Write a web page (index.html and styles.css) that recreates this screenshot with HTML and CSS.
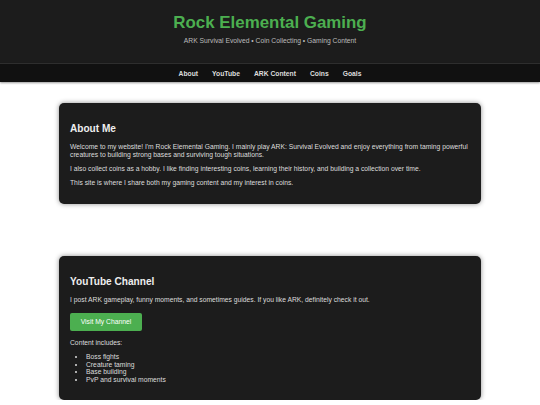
FILE: index.html
```html
<!DOCTYPE html>
<html>
<head>
<meta charset="utf-8">
<link rel="stylesheet" href="styles.css">
</head>
<body>
<header class="site-header">
  <h1 class="site-title">Rock Elemental Gaming</h1>
  <p class="site-tagline">ARK Survival Evolved • Coin Collecting • Gaming Content</p>
</header>
<nav class="site-nav">
  <a href="#about">About</a>
  <a href="#youtube">YouTube</a>
  <a href="#ark">ARK Content</a>
  <a href="#coins">Coins</a>
  <a href="#goals">Goals</a>
</nav>
<main class="content">
  <section class="card" id="about">
    <h2>About Me</h2>
    <p>Welcome to my website! I'm Rock Elemental Gaming. I mainly play ARK: Survival Evolved and enjoy everything from taming powerful creatures to building strong bases and surviving tough situations.</p>
    <p>I also collect coins as a hobby. I like finding interesting coins, learning their history, and building a collection over time.</p>
    <p>This site is where I share both my gaming content and my interest in coins.</p>
  </section>
  <section class="card" id="youtube">
    <h2>YouTube Channel</h2>
    <p>I post ARK gameplay, funny moments, and sometimes guides. If you like ARK, definitely check it out.</p>
    <a class="btn" href="#">Visit My Channel</a>
    <p>Content includes:</p>
    <ul>
      <li>Boss fights</li>
      <li>Creature taming</li>
      <li>Base building</li>
      <li>PvP and survival moments</li>
    </ul>
  </section>
</main>
</body>
</html>
```
FILE: styles.css
```css
html, body {
  margin: 0;
  padding: 0;
}
body {
  font-family: "Liberation Sans", Arial, sans-serif;
  font-size: 6.75px;
  background: #ffffff;
  color: #dddddd;
}
.site-header {
  background: #1c1c1c;
  text-align: center;
  height: 63px;
  padding-top: 13px;
  box-sizing: border-box;
}
.site-title {
  margin: 0;
  font-size: 16.9px;
  line-height: 19px;
  color: #4caf50;
  font-weight: bold;
}
.site-tagline {
  margin: 5px 0 0;
  font-size: 6.75px;
  color: #bbbbbb;
}
.site-nav {
  background: #111111;
  border-top: 1px solid #2e2e2e;
  height: 18px;
  display: flex;
  justify-content: center;
  align-items: center;
  gap: 14px;
  box-shadow: 0 1px 2px rgba(0,0,0,0.4);
}
.site-nav a {
  color: #dddddd;
  font-weight: bold;
  text-decoration: none;
  font-size: 6.75px;
}
.content {
  width: 422px;
  margin: 0 auto;
  padding-top: 21px;
  display: flex;
  flex-direction: column;
  gap: 52px;
}
.card {
  background: #1c1c1c;
  border-radius: 5px;
  padding: 1px 11px 10px;
  box-shadow: 0 0 5px rgba(0,0,0,0.45);
}
.card h2 {
  font-size: 10.1px;
  color: #eeeeee;
  margin: 19px 0 9px;
}
.card p {
  margin: 0 0 6.6px;
  line-height: 7.7px;
}
.btn {
  display: inline-block;
  background: #4caf50;
  color: #ffffff;
  text-decoration: none;
  border-radius: 2px;
  width: 72px;
  height: 18px;
  line-height: 18px;
  text-align: center;
  margin: 3px 0 8px;
}
.card ul {
  margin: 6.6px 0 6.6px;
  padding-left: 16px;
  line-height: 7.6px;
}
```
